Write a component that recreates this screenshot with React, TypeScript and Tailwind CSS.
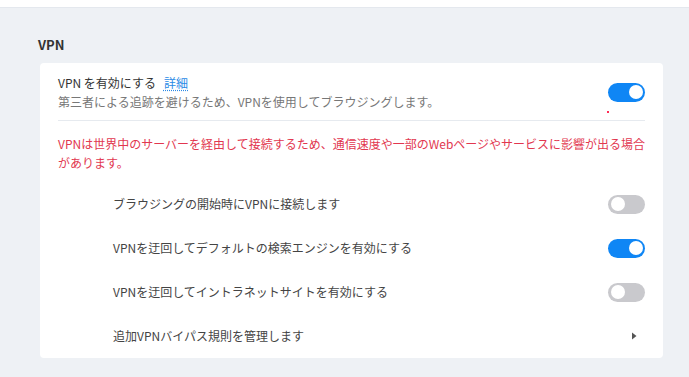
const font = { fontFamily: '"Noto Sans CJK JP", "Noto Sans", sans-serif' }

const rows = [
  { label: 'ブラウジングの開始時にVPNに接続します', type: 'toggle', on: false },
  { label: 'VPNを迂回してデフォルトの検索エンジンを有効にする', type: 'toggle', on: true },
  { label: 'VPNを迂回してイントラネットサイトを有効にする', type: 'toggle', on: false },
  { label: '追加VPNバイパス規則を管理します', type: 'link', on: false },
]

const Toggle = ({ on }: { on: boolean }) => (
  <div
    className={[
      'w-[37px] h-[19px] rounded-full flex items-center px-[2.5px]',
      on ? 'bg-[#0f86f5] justify-end' : 'bg-[#c9c9cd] justify-start',
    ].join(' ')}
  >
    <div className="w-[14px] h-[14px] rounded-full bg-white" />
  </div>
)

export default function App() {
  return (
    <div className="w-[689px] h-[377px] bg-white pt-[7px] text-[#333]" style={font}>
      <div className="h-full bg-[#eef1f5] border-t border-[#e4e8ee] pl-[38px] pr-[26px] pt-[27px]">
        <h2 className="text-[13px] font-semibold leading-[20px] text-[#333]">VPN</h2>

        <div className="mt-[8px] ml-[2px] bg-white rounded-[4px] px-[18px]">
          <div className="relative flex items-center justify-between pt-[10px] pb-[9px] border-b border-[#e6eaef]">
            <div>
              <div className="text-[12px] leading-[19px] text-[#333]">
                VPN を有効にする
                <span className="ml-[8px] text-[#2b8ae6] underline decoration-dotted underline-offset-2">詳細</span>
              </div>
              <div className="text-[12px] leading-[19px] text-[#777]">
                第三者による追跡を避けるため、VPNを使用してブラウジングします。
              </div>
            </div>
            <Toggle on />
            <span className="absolute right-[36px] bottom-[7px] w-[2px] h-[2px] bg-[#ff2d55]" />
          </div>

          <p className="-mr-[12px] pt-[13px] pb-[10px] text-[12px] leading-[19px] text-[#e2374f]">
            VPNは世界中のサーバーを経由して接続するため、通信速度や一部のWebページやサービスに影響が出る場合があります。
          </p>

          {rows.map((row) => (
            <div key={row.label} className="h-[44px] flex items-center justify-between pl-[55px]">
              <span className="text-[12px] text-[#444]">{row.label}</span>
              {row.type === 'toggle' ? (
                <Toggle on={row.on} />
              ) : (
                <svg width="6" height="8" viewBox="0 0 6 8" className="mr-[8px]">
                  <path d="M1 0.5 L5.5 4 L1 7.5 Z" fill="#555" />
                </svg>
              )}
            </div>
          ))}
        </div>
      </div>
    </div>
  )
}
